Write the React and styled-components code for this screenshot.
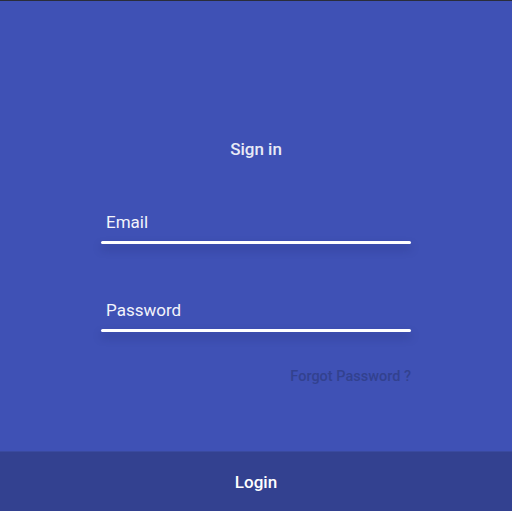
import React from 'react';
import styled, { createGlobalStyle } from 'styled-components';

const GlobalStyle = createGlobalStyle`
  * { box-sizing: border-box; }
  html, body { margin: 0; padding: 0; background: #3f51b5; }
  body { font-family: Roboto, 'Liberation Sans', sans-serif; }
`;

const Page = styled.div`
  height: 511px;
  display: flex;
  flex-direction: column;
  border-top: 1px solid #2a2d3a;
  background: #3f51b5;
`;

const Main = styled.main`
  flex: 1;
  display: flex;
  flex-direction: column;
  align-items: center;
  padding-top: 137px;
`;

const Title = styled.h1`
  margin: 0;
  font-size: 17px;
  font-weight: 500;
  line-height: 22px;
  color: #e8eaf6;
`;

const Form = styled.form`
  width: 310px;
  display: flex;
  flex-direction: column;
  margin-top: 51px;
`;

const Field = styled.label`
  display: flex;
  flex-direction: column;
  margin-bottom: ${(p) => p.gap || 0}px;
`;

const Label = styled.span`
  padding-left: 5px;
  font-size: 17px;
  line-height: 22px;
  color: #f3f4fb;
`;

const Underline = styled.div`
  margin-top: 8px;
  height: 3px;
  border-radius: 2px;
  background: #ffffff;
  box-shadow: 0 5px 8px rgba(20, 28, 80, 0.35);
`;

const Forgot = styled.a`
  align-self: flex-end;
  margin-top: 36px;
  font-size: 14.5px;
  font-weight: 500;
  color: #32418f;
  text-decoration: none;
`;

const Footer = styled.footer`
  height: 60px;
  flex-shrink: 0;
  display: flex;
  align-items: center;
  justify-content: center;
  background: #334190;
  border-top: 1px solid #3a4a9f;
`;

const LoginButton = styled.button`
  border: none;
  background: none;
  font-family: Roboto, 'Liberation Sans', sans-serif;
  font-size: 17px;
  font-weight: 500;
  color: #ffffff;
  cursor: pointer;
`;

const App = () => (
  <>
    <GlobalStyle />
    <Page>
      <Main>
        <Title>Sign in</Title>
        <Form onSubmit={(e) => e.preventDefault()}>
          <Field gap={55}>
            <Label>Email</Label>
            <Underline />
          </Field>
          <Field>
            <Label>Password</Label>
            <Underline />
          </Field>
          <Forgot href="#">Forgot Password ?</Forgot>
        </Form>
      </Main>
      <Footer>
        <LoginButton>Login</LoginButton>
      </Footer>
    </Page>
  </>
);

export default App;
